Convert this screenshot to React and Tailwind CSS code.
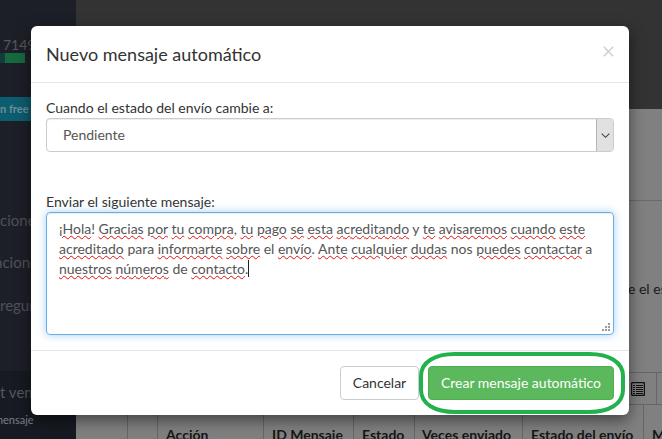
const W = ({ children }) => (
  <span className="underline decoration-wavy decoration-[#e80c0c] decoration-1 underline-offset-[1px]">{children}</span>
);

const headers = [
  ["w-[30px] pl-[8px]", ""],
  ["w-[106px] pl-[8px]", "Acción"],
  ["w-[90px] pl-[8px]", "ID Mensaje"],
  ["w-[61px] pl-[8px]", "Estado"],
  ["w-[108px] pl-[7px]", "Veces enviado"],
  ["w-[121px] pl-[8px]", "Estado del envío"],
  ["w-[19px] pl-[8px]", "M"],
];

function Sidebar() {
  return (
    <aside className="flex h-full w-[76px] shrink-0 flex-col overflow-hidden bg-[#1d1f28] text-[#4f5157]">
      <div className="h-[36px]" />
      <div className="h-[17px] pl-[3px] text-[14px] leading-[17px] whitespace-nowrap text-[#55575c]">7149</div>
      <div className="flex h-[10px]">
        <div className="w-[5px] bg-[#143c3a]" />
        <div className="w-[20px] bg-[#17693e]" />
      </div>
      <div className="h-[34px]" />
      <div className="flex h-[24px] items-center bg-[#0d5d70] text-[11px] font-bold whitespace-nowrap text-[#6f8f96]">n free</div>
      <div className="h-[88px]" />
      <div className="h-[22px] text-[15px] leading-[22px] whitespace-nowrap">ciones</div>
      <div className="h-[20px]" />
      <div className="ml-[-5px] h-[22px] text-[15px] leading-[22px] whitespace-nowrap">aciones</div>
      <div className="h-[21px]" />
      <div className="h-[22px] text-[15px] leading-[22px] whitespace-nowrap">regunt</div>
      <div className="h-[55px]" />
      <div className="flex-1 bg-[#171a22] pt-[10px]">
        <div className="h-[22px] text-[15px] leading-[22px] whitespace-nowrap text-[#55575c]">t vent</div>
        <div className="mt-[10px] ml-[-6px] text-[11px] leading-[14px] whitespace-nowrap text-[#7d7f85]">mensaje</div>
      </div>
    </aside>
  );
}

function Background() {
  return (
    <main className="flex h-full min-w-0 flex-1 flex-col bg-[#808080] text-[#161616]">
      <div className="h-[109px] shrink-0 bg-[#333333]" />
      <div className="h-[92px] shrink-0 border-b border-[#6a6a6a]" />
      <div className="h-[171px] shrink-0 pt-[78px] pl-[552px] text-[14px] leading-[20px] whitespace-nowrap text-[#1a1a1a]">e el estado</div>
      <div className="flex h-[33px] shrink-0 justify-end border-y border-[#666666] pr-[5px]">
        <div className="flex w-[30px] items-center justify-end border-r border-[#666666] pr-[11px]">
          <svg width="14" height="14" viewBox="0 0 14 14" fill="none" stroke="#111" strokeWidth="1">
            <rect x="0.5" y="0.5" width="13" height="13" rx="1.5" strokeWidth="1.4" />
            <path d="M2 3.5h10M2 5.5h10M2 7.5h10M2 9.5h10M2 11.5h10" />
            <path d="M4.5 3v9" stroke="#808080" />
          </svg>
        </div>
      </div>
      <div className="flex min-h-0 flex-1 overflow-hidden pl-[51px] text-[14px] leading-[20px] font-bold whitespace-nowrap">
        {headers.map(([w, t], i) => (
          <div key={i} className={`${w} shrink-0 border-l border-[#666666] pt-[20px]`}>{t}</div>
        ))}
      </div>
    </main>
  );
}

function Modal() {
  return (
    <div className="absolute top-[26px] left-[31px] flex h-[389px] w-[598px] flex-col rounded-[6px] bg-white text-[14px] leading-[20px] text-[#333333] shadow-[0_5px_15px_rgba(0,0,0,0.5)]">
      <div className="flex h-[57px] shrink-0 items-start justify-between border-b border-[#e5e5e5] pt-[15px] pr-[15px] pl-[15px]">
        <h4 className="text-[18px] leading-[26px] text-[#333333]">Nuevo mensaje automático</h4>
        <svg className="mt-[5px]" width="11" height="11" viewBox="0 0 11 11" fill="none" stroke="#cfcfcf" strokeWidth="1.5" aria-label="Cerrar">
          <path d="M0.8 0.8l9.4 9.4M10.2 0.8l-9.4 9.4" />
        </svg>
      </div>
      <div className="flex min-h-0 flex-1 flex-col px-[15px]">
        <label className="mt-[15px] block h-[20px]">Cuando el estado del envío cambie a:</label>
        <div className="flex h-[34px] items-stretch rounded-[4px] border border-[#cccccc] bg-white shadow-[inset_0_1px_1px_rgba(0,0,0,0.075)]">
          <span className="flex-1 self-center pl-[16px] text-[#555555]">Pendiente</span>
          <span className="flex w-[17px] items-center justify-center rounded-r-[3px] border-l border-[#b5b5b5] bg-[#e1e1e1]">
            <svg width="9" height="5" viewBox="0 0 9 5" fill="none" stroke="#444" strokeWidth="1.1">
              <path d="M0.7 0.7l3.8 3.6 3.8-3.6" />
            </svg>
          </span>
        </div>
        <label className="mt-[40px] block h-[20px]">Enviar el siguiente mensaje:</label>
        <div className="relative h-[123px] rounded-[4px] border border-[#66afe9] px-[12px] py-[6px] text-[#555555] shadow-[inset_0_1px_1px_rgba(0,0,0,0.075),0_0_8px_rgba(102,175,233,0.6)]">
          <W>¡Hola</W>! <W>Gracias</W> <W>por</W> <W>tu</W> <W>compra</W>, <W>tu</W> <W>pago</W> <W>se</W> <W>esta</W> <W>acreditando</W> y <W>te</W> <W>avisaremos</W> <W>cuando</W> <W>este</W>{" "}
          <W>acreditado</W> para <W>informarte</W> <W>sobre</W> el <W>envío</W>. <W>Ante</W> <W>cualquier</W> <W>dudas</W> nos <W>puedes</W> <W>contactar</W> a{" "}
          <W>nuestros</W> <W>números</W> de <W>contacto</W>.<span className="inline-block h-[17px] w-px bg-[#222222] align-text-bottom" />
          <svg className="absolute right-[2px] bottom-[2px]" width="9" height="9" viewBox="0 0 9 9" fill="#9a9a9a">
            <rect x="6" y="0" width="2" height="2" />
            <rect x="3" y="3" width="2" height="2" />
            <rect x="6" y="3" width="2" height="2" />
            <rect x="0" y="6" width="2" height="2" />
            <rect x="3" y="6" width="2" height="2" />
            <rect x="6" y="6" width="2" height="2" />
          </svg>
        </div>
      </div>
      <div className="flex h-[65px] shrink-0 items-start justify-end gap-[9px] border-t border-[#e5e5e5] pt-[15px] pr-[15px]">
        <button className="h-[34px] w-[79px] rounded-[4px] border border-[#cccccc] bg-white text-[#333333]">Cancelar</button>
        <button className="h-[34px] w-[186px] rounded-[4px] border border-[#4cae4c] bg-[#5cb85c] text-white">Crear mensaje automático</button>
      </div>
      <svg className="pointer-events-none absolute top-[326px] left-[388px]" width="206" height="62" viewBox="0 0 206 62" fill="none" stroke="#22b14c" strokeWidth="4">
        <path d="M36 2H170C190 2 204 10 204 24V38C204 52 190 60 170 60H36C16 60 2 52 2 38V24C2 10 16 2 36 2Z" />
      </svg>
    </div>
  );
}

export default function App() {
  return (
    <div className="relative flex h-[439px] w-[662px] overflow-hidden font-['Lato',sans-serif]">
      <Sidebar />
      <Background />
      <Modal />
    </div>
  );
}
